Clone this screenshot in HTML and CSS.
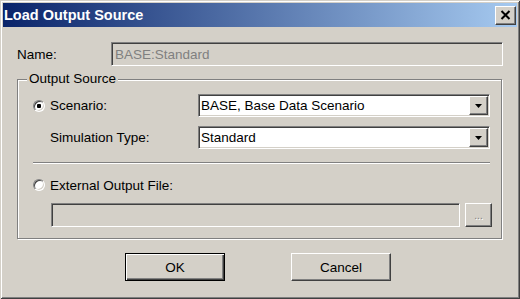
FILE: index.html
```html
<!DOCTYPE html>
<html lang="en">
<head>
  <meta charset="UTF-8">
  <title>Load Output Source</title>
  <link rel="stylesheet" href="styles.css">
</head>
<body>
  <div class="window">
    <div class="titlebar">
      <span class="title">Load Output Source</span>
      <button class="close-btn raised" aria-label="Close">
        <svg width="11" height="10" viewBox="0 0 11 10">
          <path d="M1.5 1 L9.5 9 M9.5 1 L1.5 9" stroke="#000" stroke-width="2" fill="none"/>
        </svg>
      </button>
    </div>

    <div class="content">
      <div class="name-row">
        <label class="name-label">Name:</label>
        <div class="field sunken disabled name-field">BASE:Standard</div>
      </div>

      <fieldset class="group">
        <legend>Output Source</legend>

        <div class="opt-row">
          <input type="radio" class="radio" name="src" checked>
          <label class="opt-label">Scenario:</label>
          <div class="combo sunken">
            <span class="combo-text">BASE, Base Data Scenario</span>
            <span class="combo-btn raised">
              <svg width="7" height="4" viewBox="0 0 7 4"><polygon points="0,0 7,0 3.5,4" fill="#000"/></svg>
            </span>
          </div>
        </div>

        <div class="opt-row sim-row">
          <label class="opt-label indent">Simulation Type:</label>
          <div class="combo sunken">
            <span class="combo-text">Standard</span>
            <span class="combo-btn raised">
              <svg width="7" height="4" viewBox="0 0 7 4"><polygon points="0,0 7,0 3.5,4" fill="#000"/></svg>
            </span>
          </div>
        </div>

        <div class="separator"></div>

        <div class="ext-row">
          <input type="radio" class="radio" name="src">
          <label>External Output File:</label>
        </div>

        <div class="file-row">
          <div class="field sunken disabled file-field"></div>
          <button class="browse-btn raised">...</button>
        </div>
      </fieldset>

      <div class="buttons">
        <button class="btn default-btn">OK</button>
        <button class="btn raised">Cancel</button>
      </div>
    </div>
  </div>
</body>
</html>
```

FILE: styles.css
```css
body {
  margin: 0;
  font-family: "Liberation Sans", Arial, sans-serif;
  font-size: 13.5px;
  color: #000;
  background: #d4d0c8;
}

.window {
  width: 520px;
  height: 299px;
  box-sizing: border-box;
  padding: 3px;
  background: #d4d0c8;
  box-shadow: inset 1px 1px 0 #d4d0c8, inset -1px -1px 0 #404040,
              inset 2px 2px 0 #fff, inset -2px -2px 0 #808080;
}

/* title bar */
.titlebar {
  height: 24px;
  display: flex;
  align-items: center;
  justify-content: space-between;
  padding-left: 1px;
  background: linear-gradient(to right, #0a246a, #a6caf0);
}

.title {
  color: #fff;
  font-weight: bold;
  font-size: 14.5px;
}

.close-btn {
  width: 21px;
  height: 19px;
  margin-right: 1px;
  padding: 0;
  display: flex;
  align-items: center;
  justify-content: center;
}

/* 3d borders */
.raised {
  background: #d4d0c8;
  border: 1px solid;
  border-color: #fff #404040 #404040 #fff;
  box-shadow: inset -1px -1px 0 #808080;
  box-sizing: border-box;
}

.sunken {
  border: 1px solid;
  border-color: #808080 #fff #fff #808080;
  box-shadow: inset 1px 1px 0 #404040, inset -1px -1px 0 #d4d0c8;
  box-sizing: border-box;
}

.disabled {
  background: #d4d0c8;
  color: #808080;
}

/* name */
.name-row {
  display: flex;
  align-items: center;
  margin-top: 15px;
  padding-left: 14px;
}

.name-label {
  width: 94px;
}

.field {
  display: flex;
  align-items: center;
  padding-left: 3px;
}

.name-field {
  width: 392px;
  height: 24px;
}

/* group box */
.group {
  margin: 6px 0 0 14px;
  padding: 0 0 11px;
  width: 485px;
  min-width: 0;
  box-sizing: border-box;
  border: 1px solid #808080;
  box-shadow: inset 1px 1px 0 #fff, 1px 1px 0 #fff;
}

.group legend {
  margin-left: 9px;
  padding: 0 2px;
  line-height: 14px;
  background: #d4d0c8;
}

.opt-row {
  display: flex;
  align-items: center;
  height: 23px;
  margin-top: 8px;
}

.sim-row {
  margin-top: 9px;
}

.radio {
  appearance: none;
  -webkit-appearance: none;
  flex: none;
  width: 12px;
  height: 12px;
  margin: 0 5px 0 15px;
  border-radius: 50%;
  border: 1px solid;
  border-color: #808080 #fff #fff #808080;
  box-shadow: inset 1px 1px 0 #404040, inset -1px -1px 0 #d4d0c8;
  background: #fff;
}

.radio:checked {
  background: radial-gradient(circle, #000 2px, #fff 2.5px);
}

.opt-label {
  flex: none;
  width: 148px;
}

.opt-label.indent {
  margin-left: 32px;
}

.combo {
  display: flex;
  width: 292px;
  height: 23px;
  background: #fff;
}

.combo-text {
  flex: 1;
  padding-left: 2px;
  line-height: 21px;
}

.combo-btn {
  width: 19px;
  height: 19px;
  margin: 1px;
  display: flex;
  align-items: center;
  justify-content: center;
}

.separator {
  margin: 13px 0 0 15px;
  width: 457px;
  border-top: 1px solid #808080;
  border-bottom: 1px solid #fff;
}

.ext-row {
  display: flex;
  align-items: center;
  height: 16px;
  margin-top: 13px;
}

.file-row {
  display: flex;
  margin-top: 10px;
  padding-left: 33px;
}

.file-field {
  width: 409px;
  height: 24px;
}

.browse-btn {
  width: 27px;
  height: 24px;
  margin-left: 5px;
  padding: 0;
  font: inherit;
  font-size: 10px;
  color: #808080;
  text-shadow: 1px 1px 0 #fff;
}

/* bottom buttons */
.buttons {
  display: flex;
  gap: 66px;
  margin-top: 14px;
  padding-left: 122px;
}

.btn {
  width: 100px;
  height: 28px;
  padding: 0;
  font: inherit;
  color: #000;
}

.default-btn {
  background: #d4d0c8;
  border: 1px solid #000;
  box-shadow: inset 1px 1px 0 #fff, inset -1px -1px 0 #404040, inset -2px -2px 0 #808080;
  box-sizing: border-box;
}
```
